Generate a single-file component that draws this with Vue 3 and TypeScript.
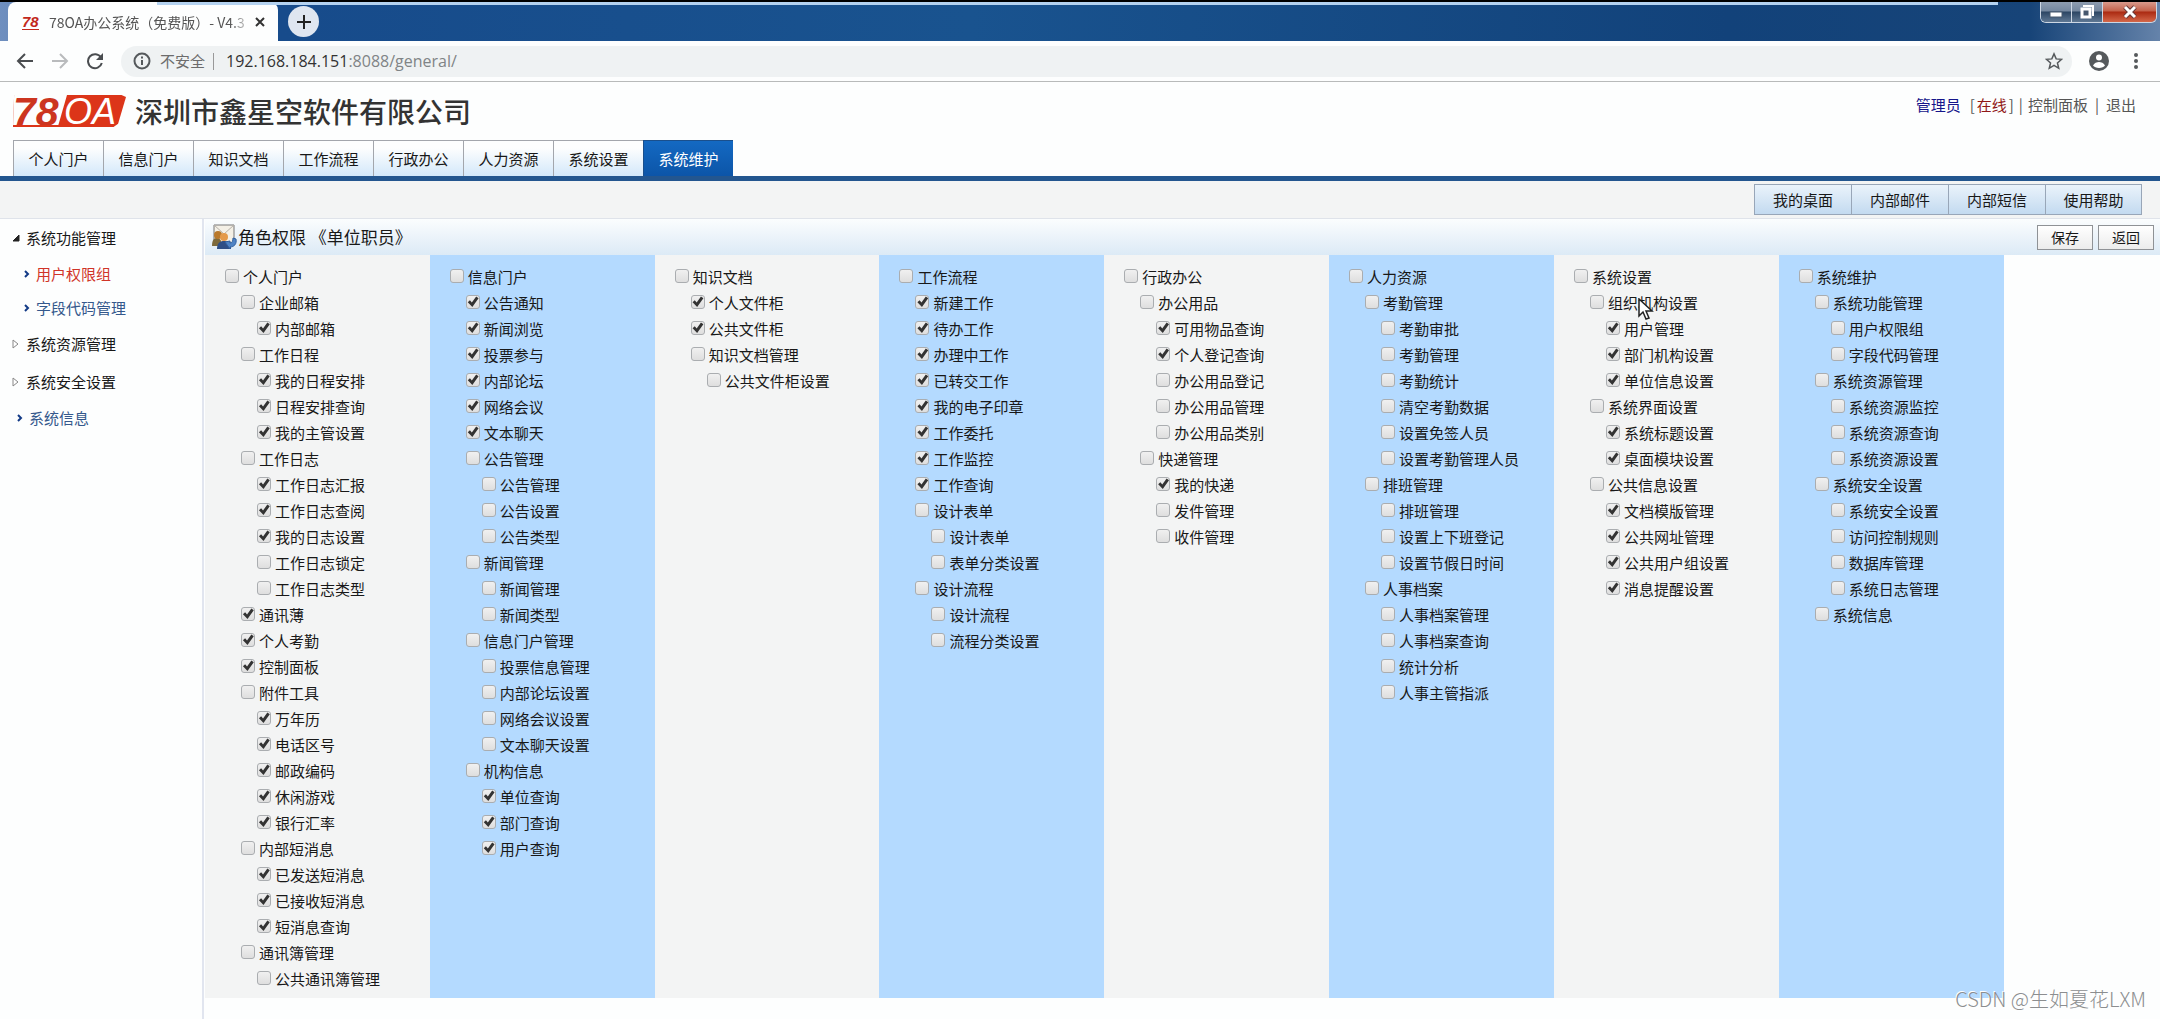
<script setup lang="ts">
import { ref } from 'vue'

interface Perm { name: string; level: number; on: boolean }

// One entry per word; leading dots give the depth, a plus sign marks a granted right.
function parse(src: string): Perm[] {
  return src.trim().split(/\s+/).map((raw) => {
    const level = raw.match(/^\.*/)![0].length
    const on = raw.charAt(level) === '+'
    return { name: raw.slice(level + (on ? 1 : 0)), level, on }
  })
}

const columns = ref<Perm[][]>([
  `个人门户 .企业邮箱 ..+内部邮箱 .工作日程 ..+我的日程安排 ..+日程安排查询 ..+我的主管设置
   .工作日志 ..+工作日志汇报 ..+工作日志查阅 ..+我的日志设置 ..工作日志锁定 ..工作日志类型
   .+通讯薄 .+个人考勤 .+控制面板 .附件工具 ..+万年历 ..+电话区号 ..+邮政编码 ..+休闲游戏 ..+银行汇率
   .内部短消息 ..+已发送短消息 ..+已接收短消息 ..+短消息查询 .通讯簿管理 ..公共通讯簿管理`,
  `信息门户 .+公告通知 .+新闻浏览 .+投票参与 .+内部论坛 .+网络会议 .+文本聊天
   .公告管理 ..公告管理 ..公告设置 ..公告类型 .新闻管理 ..新闻管理 ..新闻类型
   .信息门户管理 ..投票信息管理 ..内部论坛设置 ..网络会议设置 ..文本聊天设置
   .机构信息 ..+单位查询 ..+部门查询 ..+用户查询`,
  `知识文档 .+个人文件柜 .+公共文件柜 .知识文档管理 ..公共文件柜设置`,
  `工作流程 .+新建工作 .+待办工作 .+办理中工作 .+已转交工作 .+我的电子印章 .+工作委托 .+工作监控 .+工作查询
   .设计表单 ..设计表单 ..表单分类设置 .设计流程 ..设计流程 ..流程分类设置`,
  `行政办公 .办公用品 ..+可用物品查询 ..+个人登记查询 ..办公用品登记 ..办公用品管理 ..办公用品类别
   .快递管理 ..+我的快递 ..发件管理 ..收件管理`,
  `人力资源 .考勤管理 ..考勤审批 ..考勤管理 ..考勤统计 ..清空考勤数据 ..设置免签人员 ..设置考勤管理人员
   .排班管理 ..排班管理 ..设置上下班登记 ..设置节假日时间
   .人事档案 ..人事档案管理 ..人事档案查询 ..统计分析 ..人事主管指派`,
  `系统设置 .组织机构设置 ..+用户管理 ..+部门机构设置 ..+单位信息设置
   .系统界面设置 ..+系统标题设置 ..+桌面模块设置
   .公共信息设置 ..+文档模版管理 ..+公共网址管理 ..+公共用户组设置 ..+消息提醒设置`,
  `系统维护 .系统功能管理 ..用户权限组 ..字段代码管理
   .系统资源管理 ..系统资源监控 ..系统资源查询 ..系统资源设置
   .系统安全设置 ..系统安全设置 ..访问控制规则 ..数据库管理 ..系统日志管理 .系统信息`,
].map(parse))

const tabs = ['个人门户', '信息门户', '知识文档', '工作流程', '行政办公', '人力资源', '系统设置', '系统维护']
const active = ref('系统维护')
const shortcuts = ['我的桌面', '内部邮件', '内部短信', '使用帮助']
</script>

<template>
  <div class="screen">
    <div class="titlebar">
      <div class="tab">
        <span class="fav">78</span>
        <span class="tab-title">78OA办公系统（免费版）- V4.3</span>
        <button class="plain" aria-label="关闭标签页">
          <svg width="12" height="12" viewBox="0 0 12 12"><path d="M2 2l8 8M10 2l-8 8" stroke="#333" stroke-width="2" /></svg>
        </button>
      </div>
      <button class="new-tab" aria-label="新标签页">
        <svg width="16" height="16" viewBox="0 0 16 16"><path d="M8 1v14M1 8h14" stroke="#222" stroke-width="2" /></svg>
      </button>
      <div class="win">
        <button aria-label="最小化"><svg width="14" height="14" viewBox="0 0 14 14"><rect x="1" y="7" width="12" height="5" fill="#fff" stroke="#46586e" /></svg></button>
        <button aria-label="还原"><svg width="16" height="16" viewBox="0 0 16 16"><path d="M5 3V2h9v9h-1" fill="none" stroke="#fff" stroke-width="2" /><rect x="3" y="5" width="8" height="8" fill="#46586e" stroke="#fff" stroke-width="3" /></svg></button>
        <button class="close" aria-label="关闭"><svg width="14" height="14" viewBox="0 0 14 14"><path d="M2 2l10 10M12 2L2 12" stroke="#6a3a38" stroke-width="5" /><path d="M2 2l10 10M12 2L2 12" stroke="#fff" stroke-width="3" /></svg></button>
      </div>
    </div>

    <div class="toolbar">
      <button class="plain" aria-label="后退"><svg width="18" height="18" viewBox="0 0 18 18" fill="none" stroke="#4a4d50" stroke-width="2"><path d="M17 9H2M9 2L2 9l7 7" /></svg></button>
      <button class="plain" aria-label="前进"><svg width="18" height="18" viewBox="0 0 18 18" fill="none" stroke="#b9bbbd" stroke-width="2"><path d="M1 9h15M9 2l7 7-7 7" /></svg></button>
      <button class="plain" aria-label="刷新"><svg width="18" height="18" viewBox="0 0 18 18"><path d="M15 5.500A7 7 0 1 0 15.800 11" fill="none" stroke="#4a4d50" stroke-width="2" /><path d="M17 1v7h-7z" fill="#4a4d50" /></svg></button>
      <div class="omnibox">
        <svg width="18" height="18" viewBox="0 0 18 18"><circle cx="9" cy="9" r="7.500" fill="none" stroke="#55595c" stroke-width="2" /><path d="M9 8v5M9 4.500v2" stroke="#55595c" stroke-width="2" /></svg>
        <span class="insecure">不安全</span>
        <span class="divider"></span>
        <a class="url" href="#">192.168.184.151<span>:8088/general/</span></a>
        <button class="plain star" aria-label="收藏"><svg width="18" height="18" viewBox="0 0 24 24"><path d="M12 2.500l2.900 6.700 7.200.6-5.500 4.800 1.700 7.100-6.300-3.800-6.300 3.800 1.700-7.100L1.900 9.800l7.200-.6z" fill="none" stroke="#55595c" stroke-width="2" /></svg></button>
      </div>
      <button class="plain" aria-label="用户"><svg width="20" height="20" viewBox="0 0 20 20"><circle cx="10" cy="10" r="10" fill="#55595c" /><circle cx="10" cy="6.500" r="3" fill="#fff" /><path d="M4 14.500c1-2.500 4-3.500 6-3.500s5 1 6 3.500c-1 1.500-3.500 2.500-6 2.500s-5-1-6-2.500z" fill="#fff" /></svg></button>
      <button class="plain menu" aria-label="菜单"><svg width="6" height="16" viewBox="0 0 6 16" fill="#55595c"><circle cx="3" cy="2" r="2" /><circle cx="3" cy="8" r="2" /><circle cx="3" cy="14" r="2" /></svg></button>
    </div>

    <header class="head">
      <div class="brand">
        <div class="logo"><span class="logo-num">78</span><span class="logo-oa">OA</span></div>
        <h1>深圳市鑫星空软件有限公司</h1>
        <div class="user">
          <a href="#" class="admin">管理员</a><span>[<b>在线</b>]</span><i>|</i><a href="#">控制面板</a><i class="wide">|</i><a href="#">退出</a>
        </div>
      </div>
      <nav class="nav">
        <button v-for="t in tabs" :key="t" :class="{ on: t === active }" @click="active = t">{{ t }}</button>
      </nav>
    </header>

    <div class="shortcuts">
      <button v-for="s in shortcuts" :key="s">{{ s }}</button>
    </div>

    <div class="body">
      <aside class="side">
        <a href="#" class="group"><svg width="10" height="10" viewBox="0 0 10 10"><path d="M8 2v6H2z" fill="#222" stroke="#222" /></svg>系统功能管理</a>
        <a href="#" class="leaf current"><svg width="6" height="8" viewBox="0 0 6 8"><path d="M1 1l3 3-3 3" fill="none" stroke="#123a86" stroke-width="2" /></svg>用户权限组</a>
        <a href="#" class="leaf"><svg width="6" height="8" viewBox="0 0 6 8"><path d="M1 1l3 3-3 3" fill="none" stroke="#123a86" stroke-width="2" /></svg>字段代码管理</a>
        <a href="#" class="group"><svg width="10" height="10" viewBox="0 0 10 10"><path d="M2 1v8l5-4z" fill="#fff" stroke="#888" /></svg>系统资源管理</a>
        <a href="#" class="group"><svg width="10" height="10" viewBox="0 0 10 10"><path d="M2 1v8l5-4z" fill="#fff" stroke="#888" /></svg>系统安全设置</a>
        <a href="#" class="leaf top"><svg width="6" height="8" viewBox="0 0 6 8"><path d="M1 1l3 3-3 3" fill="none" stroke="#123a86" stroke-width="2" /></svg>系统信息</a>
      </aside>

      <main class="main">
        <div class="caption">
          <svg width="26" height="26" viewBox="0 0 26 26">
            <path d="M3 1h20v18H3z" fill="#f4f0e6" stroke="#777" />
            <path d="M3 1l10 9L23 1" fill="none" stroke="#b5b0a8" />
            <path d="M1 22c0-6 2-8 5-8s5 3 5 8z" fill="#7d6a3c" /><circle cx="7" cy="11" r="4" fill="#b9792c" />
            <path d="M6 25c0-6 3-8 7-8s7 2 7 8z" fill="#2e4f86" /><circle cx="13" cy="13" r="4" fill="#e49a4a" />
            <path d="M14 18l5-1v2c2 0 3-2 3-5l3 1c1 5-2 8-6 8v2z" fill="#4f83c4" stroke="#2f5f9f" />
          </svg>
          <h2>角色权限 《单位职员》</h2>
          <button>保存</button>
          <button>返回</button>
        </div>
        <div class="columns">
          <ul v-for="(col, c) in columns" :key="c">
            <li v-for="(p, r) in col" :key="r" :class="'l' + p.level">
              <label><input v-model="p.on" type="checkbox">{{ p.name }}</label>
            </li>
          </ul>
        </div>
      </main>
    </div>

    <svg class="cursor" width="18" height="24" viewBox="0 0 18 24"><path d="M2 1v17l4-4 3 7 3-1-3-7h6z" fill="#fff" stroke="#222" stroke-width="1.500" /></svg>
    <div class="watermark">CSDN @生如夏花LXM</div>
  </div>
</template>

<style>
body { background: #fdfefe; }
</style>

<style scoped>
.screen {
  position: relative;
  display: flex;
  flex-direction: column;
  min-height: 100vh;
  overflow: hidden;
  font: 15px/20px "Noto Sans CJK SC", sans-serif;
  color: #181818;
}
* { box-sizing: border-box; }
a { color: inherit; text-decoration: none; }
button { font: inherit; color: inherit; cursor: pointer; }
svg { display: block; flex: none; }
.plain { border: 0; padding: 0; background: none; }

.titlebar {
  position: relative;
  display: flex;
  align-items: flex-start;
  height: 41px;
  border-top: 2px solid #000;
  background: linear-gradient(90deg, #6f8fbf 0, #174b8b 13%, #19538f 45%, #12427a 80%, #174478 94%, #6583aa 100%);
}
.titlebar::before {
  content: "";
  position: absolute;
  top: 0;
  left: 157px;
  right: 162px;
  height: 3px;
  background: #b4d2f0;
}
.tab {
  display: flex;
  align-items: center;
  width: 270px;
  height: 39px;
  margin-left: 8px;
  padding: 0 12px 0 14px;
  border-radius: 8px 8px 0 0;
  background: #fdfefe;
}
.fav {
  width: 17px;
  border-bottom: 1px solid #c2281c;
  font: italic bold 15px/15px "Liberation Sans", sans-serif;
  color: #c2281c;
}
.tab-title {
  flex: 1;
  margin-left: 10px;
  overflow: hidden;
  white-space: nowrap;
  font-size: 14px;
  color: #555;
  -webkit-mask-image: linear-gradient(90deg, #000 88%, transparent);
  mask-image: linear-gradient(90deg, #000 88%, transparent);
}
.new-tab {
  display: grid;
  place-items: center;
  width: 31px;
  height: 31px;
  margin: 4px 0 0 10px;
  padding: 0;
  border: 0;
  border-radius: 50%;
  background: #dfe6f0;
}
.win {
  display: flex;
  margin: 0 3px 0 auto;
  border: 1px solid #cdd7e4;
  border-top: 0;
  border-radius: 0 0 6px 6px;
  overflow: hidden;
}
.win button {
  display: grid;
  place-items: center;
  width: 31px;
  height: 20px;
  padding: 0;
  border: 0;
  border-right: 1px solid #cdd7e4;
  background: linear-gradient(#8e9db0, #74879f 45%, #2c4664 50%, #5f7894);
}
.win .close {
  width: 53px;
  border-right: 0;
  background: linear-gradient(#d99a8c, #c4614a 45%, #ab2a12 50%, #d4684a);
}

.toolbar {
  display: flex;
  align-items: center;
  gap: 17px;
  height: 41px;
  padding: 0 21px 0 16px;
  border-bottom: 1px solid #b8baba;
}
.toolbar .menu { margin-left: 7px; }
.omnibox {
  display: flex;
  flex: 1;
  align-items: center;
  height: 31px;
  padding: 0 9px 0 12px;
  border-radius: 16px;
  background: #eff2f3;
}
.insecure { margin-left: 9px; color: #6c6c6c; }
.divider { width: 1px; height: 17px; margin: 0 12px 0 8px; background: #999; }
.url { font: 16px/24px "Open Sans", "Noto Sans", sans-serif; color: #333; }
.url span { color: #808486; }
.star { margin-left: auto; }

.head { border-bottom: 5px solid #23568f; }
.brand { display: flex; align-items: center; height: 58px; padding: 0 24px 0 13px; }
.logo {
  display: flex;
  align-items: flex-start;
  width: 113px;
  height: 32px;
  background: #dc3519;
  clip-path: polygon(1% 0, 96% 0, 100% 6%, 93% 90%, 89% 100%, 0 100%);
  color: #fff;
}
.logo-num {
  width: 54px;
  height: 30px;
  background: #fdfefe;
  clip-path: polygon(0 0, 100% 0, 84% 100%, 0 100%);
  font: italic bold 41px/34px "Liberation Sans", sans-serif;
  color: #cc3520;
}
.logo-oa { margin-left: -3px; font: italic 36px/34px "Liberation Sans", sans-serif; }
.brand h1 { margin: 0 0 0 9px; font-size: 28px; line-height: 40px; font-weight: 500; color: #333; }
.user { display: flex; align-items: center; margin: 0 0 12px auto; color: #555; }
.user .admin { margin-right: 9px; color: #15158a; }
.user b { margin: 0 2px; font-weight: 400; color: #901818; }
.user i { margin: 0 5px; font-style: normal; }
.user i.wide { margin: 0 7px; }
.nav { display: flex; padding-left: 13px; }
.nav button {
  width: 90px;
  height: 36px;
  padding: 0;
  border: 1px solid #a3a6ac;
  border-bottom: 0;
  border-right: 0;
  background: linear-gradient(#fdfefe 20%, #d3e8fa);
}
.nav .on { border-color: #1a4f8c; background: linear-gradient(#1469c2, #0c55a8); color: #fff; }

.shortcuts {
  display: flex;
  justify-content: flex-end;
  height: 38px;
  padding: 3px 18px 0 0;
  border-bottom: 1px solid #dfe3ea;
  background: #f3f4f4;
}
.shortcuts button {
  width: 97px;
  height: 31px;
  padding: 0;
  border: 1px solid #98a6b8;
  border-right-width: 0;
  background: linear-gradient(#eaf3fb, #c3daf0);
}
.shortcuts button:last-child { border-right-width: 1px; }

.body { display: flex; flex: 1; }
.side { flex: none; width: 204px; border-right: 2px solid #e1e5ef; }
.side a { display: flex; align-items: center; }
.side .group { gap: 5px; height: 38px; padding-left: 11px; }
.side .leaf { gap: 6px; height: 34px; padding-left: 24px; color: #34588c; }
.side .leaf.current { color: #d03428; }
.side .leaf.top { padding-left: 17px; }

.main { flex: 1; padding-left: 1px; }
.caption {
  display: flex;
  align-items: center;
  gap: 5px;
  height: 36px;
  padding: 0 6px;
  background: linear-gradient(#fbfdfe, #dceaf6);
}
.caption h2 { flex: 1; margin: 0 0 0 -4px; font-size: 17px; line-height: 24px; font-weight: 400; }
.caption button {
  width: 56px;
  height: 25px;
  padding: 0;
  border: 1px solid #8f9296;
  background: linear-gradient(#fff, #ececec);
  font-size: 14px;
}
.columns { display: flex; }
.columns ul {
  flex: 0 0 11.5%;
  margin: 0;
  padding: 9px 0 6px 20px;
  list-style: none;
  background: #f3f4f4;
}
.columns ul:nth-child(even) { background: #b4daff; }
.columns li { height: 26px; line-height: 26px; }
.columns .l1 { padding-left: 16px; }
.columns .l2 { padding-left: 32px; }
.columns label { display: flex; align-items: flex-start; gap: 4px; white-space: nowrap; }
.columns input {
  appearance: none;
  flex: none;
  position: relative;
  width: 14px;
  height: 14px;
  margin: 5px 0 0;
  border: 1px solid #aaadb0;
  border-radius: 3px;
  background: linear-gradient(#f0f0f0, #dedede);
}
.columns input:checked::before {
  content: "";
  position: absolute;
  inset: 0;
  background: #333;
  clip-path: polygon(8% 52%, 26% 36%, 42% 54%, 78% 4%, 98% 18%, 46% 92%);
}

.cursor { position: absolute; left: 1637px; top: 298px; }
.watermark {
  position: absolute;
  right: 14px;
  bottom: 8px;
  font-size: 20px;
  line-height: 24px;
  font-weight: 300;
  color: #8c8e90;
  text-shadow: -1px -1px 0 #fff;
}
</style>
